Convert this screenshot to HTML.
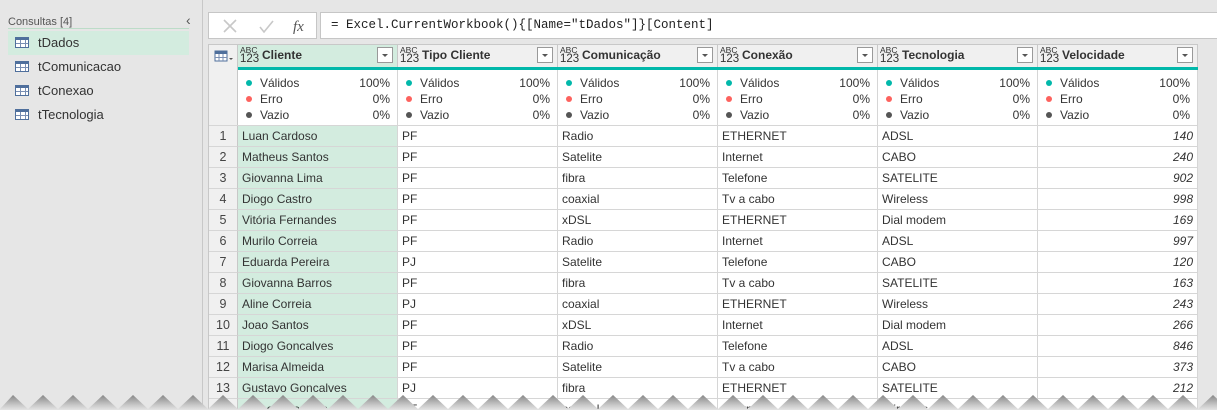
<!DOCTYPE html>
<html><head><meta charset="utf-8"><style>
*{box-sizing:border-box;margin:0;padding:0}
html,body{width:1217px;height:413px;overflow:hidden}
body{background:#e6e6e6;font-family:"Segoe UI","Liberation Sans","DejaVu Sans",sans-serif;font-size:12px;color:#333;position:relative}
.left{position:absolute;left:0;top:0;width:203px;height:413px;background:#e6e6e6;border-right:1px solid #c8c8c8}
.cons{position:absolute;left:8px;top:16px;font-size:11px;color:#555;width:181px;border-bottom:1px solid #bcdcc8}
.q{position:absolute;left:8px;width:181px;height:24px;font-size:13px;color:#333;padding-left:30px;line-height:24px}
.q.sel{background:#d3ecdf}
.ti{position:absolute;left:7px;top:6px;width:14px;height:11px;border:1px solid #4f6f9c;background:repeating-linear-gradient(90deg,transparent 0 4px,#7a8fb3 4px 5px),repeating-linear-gradient(0deg,#fff 0 3px,#7a8fb3 3px 4px)}
.ti:before{content:"";position:absolute;left:-1px;top:-1px;width:14px;height:3px;background:#4f6f9c}
.fbtn{position:absolute;left:208px;top:12px;width:109px;height:27px;background:#fff;border:1px solid #c6c6c6}
.fx{position:absolute;left:320px;top:12px;width:897px;height:27px;background:#fff;border:1px solid #c6c6c6;border-right:none;font-family:"Liberation Mono",monospace;font-size:12.5px;line-height:25px;padding-left:10px;color:#222}
.grid{position:absolute;left:208px;top:44px;width:990px;height:369px;background:#fff;border-left:1px solid #c8c8c8;border-top:1px solid #c8c8c8}
.h{position:absolute;top:0;height:22px;background:#f0f0f0;border-right:1px solid #c8c8c8}
.h .t{position:absolute;left:24px;top:3px;font-weight:bold;font-size:12px;color:#333}
.h .abc{position:absolute;left:2px;top:1px;font-size:8.5px;line-height:8px;color:#333}
.h .n{position:absolute;left:2px;top:9px;font-size:11.5px;line-height:11px;color:#333}
.dd{position:absolute;right:4px;top:2px;width:16px;height:16px;border:1px solid #999;background:#fff}
.dd:after{content:"";position:absolute;left:4px;top:6px;border-left:3px solid transparent;border-right:3px solid transparent;border-top:3px solid #555}
.teal{position:absolute;left:29px;top:22px;width:960px;height:3px;background:#01b8aa}
.st{position:absolute;top:25px;height:56px;border-right:1px solid #d6d6d6;font-size:12px}
.st div{position:relative;height:16px;line-height:16px;padding-left:22px}
.st div span{position:absolute;right:7px}
.st div:before{content:"";position:absolute;left:8px;top:5px;width:6px;height:6px;border-radius:50%}
.st .v:before{background:#01b8aa}.st .e:before{background:#fd625e}.st .z:before{background:#555}
.st .v{margin-top:5px}
.idx{position:absolute;left:0;width:29px;background:#f0f0f0;border-right:1px solid #c8c8c8;border-bottom:1px solid #d6d6d6;text-align:center;font-size:12.5px;color:#444}
.c{position:absolute;height:21px;line-height:20px;border-right:1px solid #d6d6d6;border-bottom:1px solid #d6d6d6;padding-left:4px;font-size:12px;color:#333;white-space:nowrap;overflow:hidden}
.g{background:#d3ecdf}
.r{text-align:right;padding-right:4px;font-style:italic}
</style></head><body>
<div class="left">
<div class="cons">Consultas [4]</div>
<div style="position:absolute;left:186px;top:12px;font-size:14px;color:#555">&#8249;</div>
<div class="q sel" style="top:31px"><i class="ti"></i>tDados</div>
<div class="q" style="top:55px"><i class="ti"></i>tComunicacao</div>
<div class="q" style="top:79px"><i class="ti"></i>tConexao</div>
<div class="q" style="top:103px"><i class="ti"></i>tTecnologia</div>
</div>
<div class="fbtn">
<svg width="109" height="27" style="position:absolute;left:0;top:0"><path d="M15 7l12 12M27 7L15 19" stroke="#c8c8c8" stroke-width="1.6"/><path d="M51 14l4 5 9-11" stroke="#c8c8c8" stroke-width="1.6" fill="none"/><text x="84" y="18" font-family="Liberation Serif,serif" font-style="italic" font-size="15" fill="#555">fx</text></svg>
</div>
<div class="fx">= Excel.CurrentWorkbook(){[Name="tDados"]}[Content]</div>
<div class="grid">
<div class="h" style="left:0;width:29px"><svg width="29" height="22"><rect x="6" y="6" width="12" height="10" fill="#fff" stroke="#4f6f9c"/><rect x="6" y="6" width="12" height="3" fill="#4f6f9c"/><path d="M10 9v7M14 9v7M6 12.5h12" stroke="#7a8fb3"/><path d="M20 13l2 2 2-2" fill="#555"/></svg></div>
<div class="h g" style="left:29px;width:160px"><span class="abc">ABC</span><span class="n">123</span><span class="t">Cliente</span><i class="dd"></i></div>
<div class="h" style="left:189px;width:160px"><span class="abc">ABC</span><span class="n">123</span><span class="t">Tipo Cliente</span><i class="dd"></i></div>
<div class="h" style="left:349px;width:160px"><span class="abc">ABC</span><span class="n">123</span><span class="t">Comunicação</span><i class="dd"></i></div>
<div class="h" style="left:509px;width:160px"><span class="abc">ABC</span><span class="n">123</span><span class="t">Conexão</span><i class="dd"></i></div>
<div class="h" style="left:669px;width:160px"><span class="abc">ABC</span><span class="n">123</span><span class="t">Tecnologia</span><i class="dd"></i></div>
<div class="h" style="left:829px;width:160px"><span class="abc">ABC</span><span class="n">123</span><span class="t">Velocidade</span><i class="dd"></i></div>
<div class="teal"></div>
<div class="idx" style="top:22px;height:59px"></div>
<div class="st" style="left:29px;width:160px"><div class="v">Válidos<span>100%</span></div><div class="e">Erro<span>0%</span></div><div class="z">Vazio<span>0%</span></div></div>
<div class="st" style="left:189px;width:160px"><div class="v">Válidos<span>100%</span></div><div class="e">Erro<span>0%</span></div><div class="z">Vazio<span>0%</span></div></div>
<div class="st" style="left:349px;width:160px"><div class="v">Válidos<span>100%</span></div><div class="e">Erro<span>0%</span></div><div class="z">Vazio<span>0%</span></div></div>
<div class="st" style="left:509px;width:160px"><div class="v">Válidos<span>100%</span></div><div class="e">Erro<span>0%</span></div><div class="z">Vazio<span>0%</span></div></div>
<div class="st" style="left:669px;width:160px"><div class="v">Válidos<span>100%</span></div><div class="e">Erro<span>0%</span></div><div class="z">Vazio<span>0%</span></div></div>
<div class="st" style="left:829px;width:160px"><div class="v">Válidos<span>100%</span></div><div class="e">Erro<span>0%</span></div><div class="z">Vazio<span>0%</span></div></div>
<div style="position:absolute;left:0;top:80px;width:989px;height:1px;background:#d6d6d6"></div>

<div class="idx" style="top:81px;height:21px;line-height:20px">1</div><div class="c g" style="top:81px;left:29px;width:160px">Luan Cardoso</div><div class="c" style="top:81px;left:189px;width:160px">PF</div><div class="c" style="top:81px;left:349px;width:160px">Radio</div><div class="c" style="top:81px;left:509px;width:160px">ETHERNET</div><div class="c" style="top:81px;left:669px;width:160px">ADSL</div><div class="c r" style="top:81px;left:829px;width:160px">140</div>
<div class="idx" style="top:102px;height:21px;line-height:20px">2</div><div class="c g" style="top:102px;left:29px;width:160px">Matheus Santos</div><div class="c" style="top:102px;left:189px;width:160px">PF</div><div class="c" style="top:102px;left:349px;width:160px">Satelite</div><div class="c" style="top:102px;left:509px;width:160px">Internet</div><div class="c" style="top:102px;left:669px;width:160px">CABO</div><div class="c r" style="top:102px;left:829px;width:160px">240</div>
<div class="idx" style="top:123px;height:21px;line-height:20px">3</div><div class="c g" style="top:123px;left:29px;width:160px">Giovanna Lima</div><div class="c" style="top:123px;left:189px;width:160px">PF</div><div class="c" style="top:123px;left:349px;width:160px">fibra</div><div class="c" style="top:123px;left:509px;width:160px">Telefone</div><div class="c" style="top:123px;left:669px;width:160px">SATELITE</div><div class="c r" style="top:123px;left:829px;width:160px">902</div>
<div class="idx" style="top:144px;height:21px;line-height:20px">4</div><div class="c g" style="top:144px;left:29px;width:160px">Diogo Castro</div><div class="c" style="top:144px;left:189px;width:160px">PF</div><div class="c" style="top:144px;left:349px;width:160px">coaxial</div><div class="c" style="top:144px;left:509px;width:160px">Tv a cabo</div><div class="c" style="top:144px;left:669px;width:160px">Wireless</div><div class="c r" style="top:144px;left:829px;width:160px">998</div>
<div class="idx" style="top:165px;height:21px;line-height:20px">5</div><div class="c g" style="top:165px;left:29px;width:160px">Vitória Fernandes</div><div class="c" style="top:165px;left:189px;width:160px">PF</div><div class="c" style="top:165px;left:349px;width:160px">xDSL</div><div class="c" style="top:165px;left:509px;width:160px">ETHERNET</div><div class="c" style="top:165px;left:669px;width:160px">Dial modem</div><div class="c r" style="top:165px;left:829px;width:160px">169</div>
<div class="idx" style="top:186px;height:21px;line-height:20px">6</div><div class="c g" style="top:186px;left:29px;width:160px">Murilo Correia</div><div class="c" style="top:186px;left:189px;width:160px">PF</div><div class="c" style="top:186px;left:349px;width:160px">Radio</div><div class="c" style="top:186px;left:509px;width:160px">Internet</div><div class="c" style="top:186px;left:669px;width:160px">ADSL</div><div class="c r" style="top:186px;left:829px;width:160px">997</div>
<div class="idx" style="top:207px;height:21px;line-height:20px">7</div><div class="c g" style="top:207px;left:29px;width:160px">Eduarda Pereira</div><div class="c" style="top:207px;left:189px;width:160px">PJ</div><div class="c" style="top:207px;left:349px;width:160px">Satelite</div><div class="c" style="top:207px;left:509px;width:160px">Telefone</div><div class="c" style="top:207px;left:669px;width:160px">CABO</div><div class="c r" style="top:207px;left:829px;width:160px">120</div>
<div class="idx" style="top:228px;height:21px;line-height:20px">8</div><div class="c g" style="top:228px;left:29px;width:160px">Giovanna Barros</div><div class="c" style="top:228px;left:189px;width:160px">PF</div><div class="c" style="top:228px;left:349px;width:160px">fibra</div><div class="c" style="top:228px;left:509px;width:160px">Tv a cabo</div><div class="c" style="top:228px;left:669px;width:160px">SATELITE</div><div class="c r" style="top:228px;left:829px;width:160px">163</div>
<div class="idx" style="top:249px;height:21px;line-height:20px">9</div><div class="c g" style="top:249px;left:29px;width:160px">Aline Correia</div><div class="c" style="top:249px;left:189px;width:160px">PJ</div><div class="c" style="top:249px;left:349px;width:160px">coaxial</div><div class="c" style="top:249px;left:509px;width:160px">ETHERNET</div><div class="c" style="top:249px;left:669px;width:160px">Wireless</div><div class="c r" style="top:249px;left:829px;width:160px">243</div>
<div class="idx" style="top:270px;height:21px;line-height:20px">10</div><div class="c g" style="top:270px;left:29px;width:160px">Joao Santos</div><div class="c" style="top:270px;left:189px;width:160px">PF</div><div class="c" style="top:270px;left:349px;width:160px">xDSL</div><div class="c" style="top:270px;left:509px;width:160px">Internet</div><div class="c" style="top:270px;left:669px;width:160px">Dial modem</div><div class="c r" style="top:270px;left:829px;width:160px">266</div>
<div class="idx" style="top:291px;height:21px;line-height:20px">11</div><div class="c g" style="top:291px;left:29px;width:160px">Diogo Goncalves</div><div class="c" style="top:291px;left:189px;width:160px">PF</div><div class="c" style="top:291px;left:349px;width:160px">Radio</div><div class="c" style="top:291px;left:509px;width:160px">Telefone</div><div class="c" style="top:291px;left:669px;width:160px">ADSL</div><div class="c r" style="top:291px;left:829px;width:160px">846</div>
<div class="idx" style="top:312px;height:21px;line-height:20px">12</div><div class="c g" style="top:312px;left:29px;width:160px">Marisa Almeida</div><div class="c" style="top:312px;left:189px;width:160px">PF</div><div class="c" style="top:312px;left:349px;width:160px">Satelite</div><div class="c" style="top:312px;left:509px;width:160px">Tv a cabo</div><div class="c" style="top:312px;left:669px;width:160px">CABO</div><div class="c r" style="top:312px;left:829px;width:160px">373</div>
<div class="idx" style="top:333px;height:21px;line-height:20px">13</div><div class="c g" style="top:333px;left:29px;width:160px">Gustavo Goncalves</div><div class="c" style="top:333px;left:189px;width:160px">PJ</div><div class="c" style="top:333px;left:349px;width:160px">fibra</div><div class="c" style="top:333px;left:509px;width:160px">ETHERNET</div><div class="c" style="top:333px;left:669px;width:160px">SATELITE</div><div class="c r" style="top:333px;left:829px;width:160px">212</div>
<div class="idx" style="top:354px;height:21px;line-height:20px">14</div><div class="c g" style="top:354px;left:29px;width:160px">Pamela Ferreira</div><div class="c" style="top:354px;left:189px;width:160px">PF</div><div class="c" style="top:354px;left:349px;width:160px">coaxial</div><div class="c" style="top:354px;left:509px;width:160px">Internet</div><div class="c" style="top:354px;left:669px;width:160px">Wireless</div><div class="c r" style="top:354px;left:829px;width:160px">556</div>
</div>
<svg width="1217" height="413" style="position:absolute;left:0;top:0">
<defs><linearGradient id="gg" x1="0" y1="0" x2="0" y2="1"><stop offset="0" stop-color="#7a7a7a"/><stop offset="0.6" stop-color="#c8c8c8"/><stop offset="1" stop-color="#f4f4f4"/></linearGradient><pattern id="zz" x="-2" y="393" width="30" height="20" patternUnits="userSpaceOnUse"><rect x="0" y="0" width="30" height="20" fill="#fff"/><polygon points="0,20 0,16 15,2 30,16 30,20" fill="url(#gg)"/></pattern>
<clipPath id="cp"><polygon points="0,413 0,409 13,395 28,409 43,395 58,409 73,395 88,409 103,395 118,409 133,395 148,409 163,395 178,409 193,395 208,409 223,395 238,409 253,395 268,409 283,395 298,409 313,395 328,409 343,395 358,409 373,395 388,409 403,395 418,409 433,395 448,409 463,395 478,409 493,395 508,409 523,395 538,409 553,395 568,409 583,395 598,409 613,395 628,409 643,395 658,409 673,395 688,409 703,395 718,409 733,395 748,409 763,395 778,409 793,395 808,409 823,395 838,409 853,395 868,409 883,395 898,409 913,395 928,409 943,395 958,409 973,395 988,409 1003,395 1018,409 1033,395 1048,409 1063,395 1078,409 1093,395 1108,409 1123,395 1138,409 1153,395 1168,409 1183,395 1198,409 1213,395 1228,409 1228,413"/></clipPath></defs>
<rect x="0" y="393" width="1217" height="20" fill="url(#gg)" clip-path="url(#cp)"/>
<rect x="0" y="410" width="1217" height="3" fill="#fff"/>
</svg>
</body></html>
